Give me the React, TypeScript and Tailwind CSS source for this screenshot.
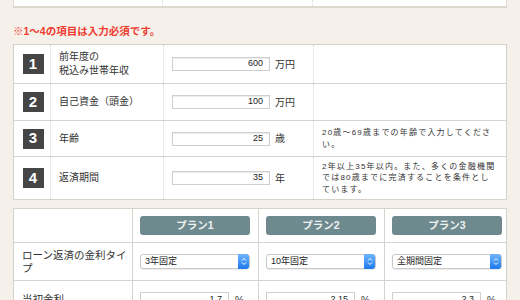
const font = "font-['Liberation_Sans','Noto_Sans_CJK_JP',sans-serif]";

const rows = [
  { n: "1", label: ["前年度の", "税込み世帯年収"], value: "600", unit: "万円", note: [] as string[], h: "h-[38px]" },
  { n: "2", label: ["自己資金（頭金）"], value: "100", unit: "万円", note: [], h: "h-[37px]" },
  { n: "3", label: ["年齢"], value: "25", unit: "歳", note: ["20歳〜69歳までの年齢で入力してくださ", "い。"], h: "h-[36px]" },
  {
    n: "4",
    label: ["返済期間"],
    value: "35",
    unit: "年",
    note: ["2年以上35年以内。また、多くの金融機関", "では80歳までに完済することを条件とし", "ています。"],
    h: "h-[43px]",
  },
];

const plans = [
  { name: "プラン1", type: "3年固定", rate: "1.7" },
  { name: "プラン2", type: "10年固定", rate: "2.15" },
  { name: "プラン3", type: "全期間固定", rate: "2.3" },
];

const SelectBox = ({ text }: { text: string }) => (
  <div className="flex h-[15px] w-[110px] items-center rounded-[3px] border border-[#c9c9c9] bg-white shadow-[0_1px_1px_rgba(0,0,0,0.08)]">
    <span className="flex-1 pl-[4px] text-[9px] leading-none text-[#222]">{text}</span>
    <span className="flex h-[15px] w-[11px] items-center justify-center rounded-r-[3px] bg-gradient-to-b from-[#6cb6ff] to-[#1a78ec]">
      <svg width="6" height="9" viewBox="0 0 6 9">
        <path d="M1 3.5 L3 1.5 L5 3.5 M1 5.5 L3 7.5 L5 5.5" stroke="white" strokeWidth="1" fill="none" />
      </svg>
    </span>
  </div>
);

export default function App() {
  return (
    <div className={`h-[300px] w-[520px] overflow-hidden bg-[#f5f1ea] px-[13px] text-[#333] ${font}`}>
      {/* previous block */}
      <div className="flex h-[8px] border-x border-b-2 border-[#dcd8d0] bg-white">
        <div className="w-[149px] border-r border-dotted border-[#ddd]" />
        <div className="w-[150px] border-r border-dotted border-[#ddd]" />
      </div>

      <p className="mt-[16px] h-[20px] text-[10.5px] font-bold leading-[14px] text-[#ee3b30]">
        ※1〜4の項目は入力必須です。
      </p>

      {/* required inputs */}
      <div className="border border-[#d6d2ca] bg-white">
        {rows.map((r, i) => (
          <div key={r.n} className={`flex ${r.h} ${i > 0 ? "border-t border-[#d6d3ce]" : ""}`}>
            <div className="flex w-[37px] items-center justify-center border-r border-dotted border-[#d8d8d8] pl-[2px]">
              <span className="flex h-[20px] w-[21px] items-center justify-center bg-[#454545] text-[15px] font-bold text-white">
                {r.n}
              </span>
            </div>
            <div className="flex w-[113px] flex-col justify-center border-r border-dotted border-[#d8d8d8] pl-[8px] text-[10px] leading-[14px]">
              {r.label.map((l) => (
                <span key={l}>{l}</span>
              ))}
            </div>
            <div className="flex w-[150px] items-center border-r border-dotted border-[#d8d8d8] pl-[8px]">
              <span className="flex h-[14px] w-[98px] items-center justify-end border border-[#cfcfcf] pr-[6px] text-[9px] text-[#222] shadow-[inset_0_1px_1px_rgba(0,0,0,0.08)]">
                {r.value}
              </span>
              <span className="ml-[5px] text-[10px]">{r.unit}</span>
            </div>
            <div className="flex flex-1 flex-col justify-center pl-[8px] text-[8px] leading-[11.5px] tracking-[1.2px] text-[#333]">
              {r.note.map((l) => (
                <span key={l}>{l}</span>
              ))}
            </div>
          </div>
        ))}
      </div>

      {/* plans */}
      <div className="mt-[8px] border border-b-0 border-[#d6d2ca] bg-white">
        <div className="flex h-[34px] border-b border-[#d6d3ce]">
          <div className="w-[119px] border-r border-[#d6d3ce]" />
          {plans.map((p, i) => (
            <div
              key={p.name}
              className={`flex w-[126px] items-center pl-[7px] ${i < 2 ? "border-r border-[#d6d3ce]" : "flex-1"}`}
            >
              <span className="flex h-[19px] w-[110px] items-center justify-center rounded-[3px] bg-[#6f8a8e] text-[10.5px] font-bold text-[#eef2f2]">
                {p.name}
              </span>
            </div>
          ))}
        </div>
        <div className="flex h-[38px] border-b border-[#d6d3ce]">
          <div className="w-[119px] border-r border-[#d6d3ce] py-[6px] pl-[8px] text-[10.5px] leading-[13px]">
            ローン返済の金利タイ
            <br />
            プ
          </div>
          {plans.map((p, i) => (
            <div
              key={p.name}
              className={`flex w-[126px] items-center pl-[7px] ${i < 2 ? "border-r border-[#d6d3ce]" : "flex-1"}`}
            >
              <SelectBox text={p.type} />
            </div>
          ))}
        </div>
        <div className="flex h-[38px]">
          <div className="flex w-[119px] items-center border-r border-[#d6d3ce] pl-[8px] text-[10.5px]">
            当初金利
          </div>
          {plans.map((p, i) => (
            <div
              key={p.name}
              className={`flex w-[126px] items-center pl-[7px] ${i < 2 ? "border-r border-[#d6d3ce]" : "flex-1"}`}
            >
              <span className="flex h-[16px] w-[89px] items-center justify-end border border-[#cfcfcf] pr-[6px] text-[9px] text-[#222]">
                {p.rate}
              </span>
              <span className="ml-[6px] text-[10px]">%</span>
            </div>
          ))}
        </div>
      </div>
    </div>
  );
}
